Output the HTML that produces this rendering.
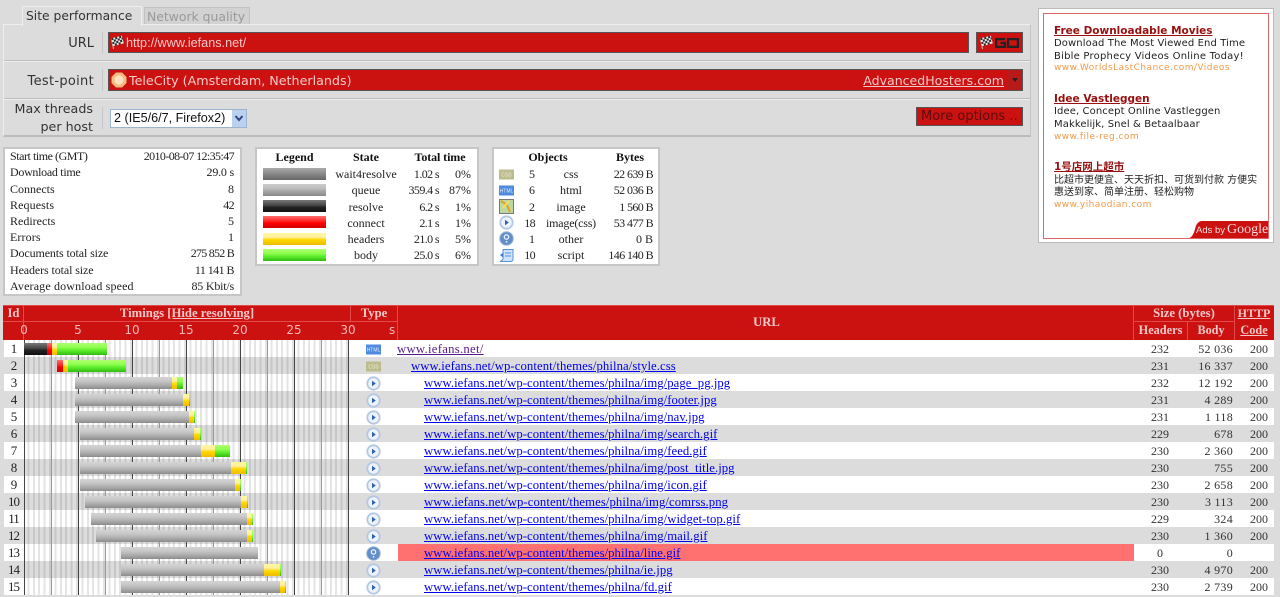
<!DOCTYPE html>
<html><head><meta charset="utf-8"><title>Site performance</title>
<style>
html,body{margin:0;padding:0}
html{background:#dcdcdc}
body{width:1280px;height:597px;overflow:hidden;background:#dcdcdc;position:relative;font-family:"Liberation Serif","Noto Serif CJK SC",serif;font-size:12px;color:#222;filter:blur(.3px)}
div,a,span.a,svg{position:absolute}
.d{font-family:"DejaVu Sans","Noto Sans CJK SC",sans-serif;white-space:nowrap}
.box{background:#fff;border:2px solid #c6c6c6;box-sizing:border-box}
.t{white-space:nowrap;line-height:16px;height:16px}
.rt{text-align:right}.ct{text-align:center}
.n{letter-spacing:-.6px}
.h{font-weight:bold;color:#111}
.sw{left:263px;width:63px;height:12px}
.gy{background:linear-gradient(#aaa,#999 25%,#888 50%,#666)}
.qu{background:linear-gradient(#d4d4d4,#c6c6c6 35%,#b2b2b2 60%,#8c8c8c)}
.bk{background:linear-gradient(#777,#444 45%,#222 60%,#111)}
.re{background:linear-gradient(#ff7070,#ff2020 45%,#f00 60%,#c00)}
.ye{background:linear-gradient(#fff7a0,#fff0a0 35%,#ffd800 55%,#eebb00)}
.gr{background:linear-gradient(#b0ff70,#90ff50 35%,#60ee30 60%,#30bb10)}
.tb{top:305px;left:3px;width:1271px;height:35px;background:#cc1111}
.hd{color:#f3c8c8;font-weight:bold;text-align:center;white-space:nowrap;font-size:12.7px;line-height:17px}
.ln{background:#e24a4a}
.row{left:4px;width:1270px;height:17px;overflow:hidden}
.w{background:#fff}.g{background:#dcdcdc}
.row div{height:17px;line-height:19px;white-space:nowrap;font-size:12px}
.row .id{left:0;width:19px;text-align:center;font-size:13px;letter-spacing:-1px;color:#222;line-height:17px}
.row .grid{left:20px;top:0;width:325px;height:17px;background-image:linear-gradient(90deg,#444 1px,transparent 1px),linear-gradient(90deg,#999 1px,transparent 1px),repeating-linear-gradient(90deg,transparent 0,transparent 3.4px,rgba(0,0,0,.1) 3.4px,rgba(0,0,0,.1) 5.4px);background-size:54px 17px,54px 17px,100% 17px;background-position:0 0,27px 0,0 0;background-repeat:repeat-x,repeat-x,no-repeat}
.row .b{top:3px;height:12px;line-height:12px}
.row .u{color:#00e;text-decoration:underline;font-size:12.72px;letter-spacing:.04px}
.hs{left:1134px;width:44px;text-align:center;color:#333}
.bs{left:1160px;width:69px;text-align:right;color:#333;letter-spacing:.3px}
.cs{left:1230px;width:34px;text-align:right;color:#333}
.ic{left:362px;top:2px;width:15px;height:15px}
.ad1{left:1054px;font-size:10.500px;line-height:13px;font-weight:bold;color:#990f0f;text-decoration:underline}
.ad2{left:1054px;font-size:10px;line-height:13px;color:#222}
.ad3{left:1054px;font-size:9px;line-height:12px;color:#f09a4a;letter-spacing:.45px}
</style></head><body>
<svg width="0" height="0" style="left:0;top:0"><defs>
<symbol id="pl" viewBox="0 0 15 15"><circle cx="7.5" cy="7.5" r="6.2" fill="#eef3fb" stroke="#b4c8e4" stroke-width="1.8"/><path d="M6 4.800 9.800 7.500 6 10.200Z" fill="#2f63b0"/></symbol>
<symbol id="ht" viewBox="0 0 15 15"><rect x="0" y="2.500" width="15" height="10" fill="#4f8ae0"/><text x="7.500" y="9.600" font-size="5" text-anchor="middle" fill="#e4eefc" font-family="Liberation Sans">HTML</text></symbol>
<symbol id="cs" viewBox="0 0 15 15"><rect x="0" y="2.500" width="15" height="10" fill="#bcbc8c"/><text x="7.500" y="9.600" font-size="5" text-anchor="middle" fill="#f0f0e0" font-family="Liberation Sans">CSS</text></symbol>
<symbol id="qu" viewBox="0 0 15 15"><circle cx="7.5" cy="7.5" r="6.8" fill="#5f8ec8" stroke="#a4bad6"/><circle cx="7.5" cy="6" r="2.200" fill="none" stroke="#e8f0fa" stroke-width="1.300"/><rect x="6.800" y="10" width="1.500" height="1.600" fill="#e8f0fa"/></symbol>
<symbol id="fl" viewBox="0 0 14 15"><path d="M3.500 14 1.500 4" stroke="#bbb" stroke-width="1"/><g transform="rotate(-14 7 6)"><rect x="2" y="2" width="11" height="8" fill="#e4e4e4"/><path d="M2 2h2v2H2zM6 2h2v2H6zM10 2h2v2h-2zM4 4h2v2H4zM8 4h2v2H8zM12 4h1v2h-1zM2 6h2v2H2zM6 6h2v2H6zM10 6h2v2h-2zM4 8h2v2H4zM8 8h2v2H8z" fill="#2a2a2a"/></g></symbol>
</defs></svg>

<!-- tabs -->
<div style="left:22px;top:6px;width:120px;height:20px;background:#dcdcdc;border:1px solid #eee;border-bottom:0;box-sizing:border-box;z-index:2"></div>
<div class="d" style="left:26px;top:8px;font-size:12.3px;line-height:17px;color:#333;z-index:3">Site performance</div>
<div style="left:144px;top:7px;width:106px;height:18px;background:#d2d2d2;border:1px solid #c2c2c2;box-sizing:border-box"></div>
<div class="d" style="left:147px;top:8px;font-size:12.4px;line-height:17px;color:#999">Network quality</div>

<!-- form panel -->
<div style="left:3px;top:24px;width:1028px;height:113px;background:#dcdcdc;border:1px solid #c4c4c4;border-top-color:#eee;border-left-color:#eee;border-bottom:2px solid #bbb;box-sizing:border-box"></div>
<div style="left:4px;top:60px;width:1026px;height:1px;background:#bdbdbd"></div><div style="left:4px;top:61px;width:1026px;height:1px;background:#efefef"></div>
<div style="left:4px;top:98px;width:1026px;height:1px;background:#bdbdbd"></div><div style="left:4px;top:99px;width:1026px;height:1px;background:#efefef"></div>
<div style="left:102px;top:32px;width:1px;height:22px;background:#c8c8c8"></div>
<div style="left:102px;top:69px;width:1px;height:22px;background:#c8c8c8"></div>
<div style="left:102px;top:107px;width:1px;height:22px;background:#c8c8c8"></div>

<div class="d rt" style="left:20px;width:74px;top:35px;font-size:13px;line-height:17px;color:#333">URL</div>
<div class="d rt" style="left:20px;width:74px;top:73px;font-size:13px;line-height:17px;color:#333;letter-spacing:.3px">Test-point</div>
<div class="d rt" style="left:3px;width:90px;top:100px;font-size:12.7px;line-height:18px;color:#333">Max threads<br>per host</div>

<div style="left:108px;top:32px;width:861px;height:21px;background:#cc1111;border:1px solid #555;box-sizing:border-box"></div>
<svg style="left:110px;top:35px" width="14" height="15"><use href="#fl"/></svg>
<div style="left:126px;top:35px;font-family:'Liberation Sans',sans-serif;font-size:12.65px;line-height:16px;color:#f5c8c8;white-space:nowrap">http://www.iefans.net/</div>

<div style="left:976px;top:32px;width:47px;height:21px;background:#cc1111;border:1px solid #555;box-sizing:border-box"></div>
<svg style="left:979px;top:35px" width="14" height="15"><use href="#fl"/></svg>
<svg style="left:995px;top:38px" width="24" height="10" viewBox="0 0 24 10"><path d="M10 1.100H1.100V8.900H10V5H5.500M13 1.100H22.900V8.900H13z" fill="none" stroke="#222" stroke-width="2.200"/></svg>

<div style="left:108px;top:69px;width:915px;height:22px;background:#cc1111;border:1px solid #555;box-sizing:border-box"></div>
<svg style="left:111px;top:72px" width="16" height="16" viewBox="0 0 16 16"><path d="M5 .5h6L15.500 5v6L11 15.500H5L.5 11V5z" fill="#f8bc80"/><circle cx="8" cy="8" r="4.500" fill="#fde2c4"/></svg>
<div class="d" style="left:129px;top:72px;font-size:12.7px;line-height:17px;color:#f3c8c8">TeleCity (Amsterdam, Netherlands)</div>
<div class="d rt" style="left:804px;width:200px;top:72px;font-size:12.55px;line-height:17px;color:#f3c8c8;text-decoration:underline">AdvancedHosters.com</div>
<div style="left:1007px;top:70px;width:15px;height:20px;background:#b81a1a"></div>
<svg style="left:1011px;top:77px" width="8" height="6" viewBox="0 0 8 6"><path d="M1 1h6L4 5z" fill="#222"/></svg>

<div style="left:110px;top:109px;width:137px;height:19px;background:#fff;border:1px solid #9cb4d0;box-sizing:border-box"></div>
<div style="left:114px;top:110px;font-family:'Liberation Sans',sans-serif;font-size:12.6px;line-height:16px;color:#111;white-space:nowrap">2 (IE5/6/7, Firefox2)</div>
<div style="left:232px;top:110px;width:14px;height:17px;background:#bcd0f0"></div>
<svg style="left:234px;top:115px" width="10" height="7" viewBox="0 0 10 7"><path d="M1.500 1 5 5 8.500 1" fill="none" stroke="#2c4a80" stroke-width="2"/></svg>

<div style="left:916px;top:107px;width:107px;height:19px;background:#cc1111;border:1px solid #555;box-sizing:border-box"></div>
<div class="d" style="left:921px;top:108px;font-size:13px;line-height:17px;color:#5a0d0d">More options ..</div>

<!-- ad -->
<div class="box" style="left:1038px;top:8px;width:236px;height:235px;background:#fff;border-width:1px;border-color:#bbb"></div>
<div style="left:1043px;top:13px;width:226px;height:226px;border:1px solid #dd6666;box-sizing:border-box;background:#fff"></div>
<div class="d ad1" style="top:25px">Free Downloadable Movies</div>
<div class="d ad2" style="top:37px;letter-spacing:.1px">Download The Most Viewed End Time</div>
<div class="d ad2" style="top:50px;letter-spacing:.22px">Bible Prophecy Videos Online Today!</div>
<div class="d ad3" style="top:62px">www.WorldsLastChance.com/Videos</div>
<div class="d ad1" style="top:93px">Idee Vastleggen</div>
<div class="d ad2" style="top:105px;letter-spacing:.1px">Idee, Concept Online Vastleggen</div>
<div class="d ad2" style="top:118px;letter-spacing:.1px">Makkelijk, Snel &amp; Betaalbaar</div>
<div class="d ad3" style="top:131px">www.file-reg.com</div>
<div class="d ad1" style="top:161px">1号店网上超市</div>
<div class="d ad2" style="top:174px">比超市更便宜、天天折扣、可货到付款 方便实</div>
<div class="d ad2" style="top:186px">惠送到家、简单注册、轻松购物</div>
<div class="d ad3" style="top:199px">www.yihaodian.com</div>
<svg style="left:1189px;top:221px" width="79" height="17" viewBox="0 0 79 17"><path d="M0 17Q4 16 6 8 8 0 13 0H79V17z" fill="#cc1111"/></svg>
<div style="left:1196px;top:224px;font-family:'Liberation Sans',sans-serif;font-size:9.500px;line-height:13px;color:#f6dcdc;white-space:nowrap">Ads by</div>
<div style="left:1227px;top:221px;font-family:'Liberation Serif',serif;font-size:14px;line-height:17px;color:#f6dcdc;white-space:nowrap">Google</div>

<!-- stats -->
<div class="box" style="left:3px;top:147px;width:239px;height:149px"></div>
<div class="t" style="left:10px;top:148px;letter-spacing:-.45px">Start time (GMT)</div><div class="t rt" style="left:114px;width:120px;top:148px;letter-spacing:-.6px">2010-08-07 12:35:47</div>
<div class="t" style="left:10px;top:164px;letter-spacing:-.3px">Download time</div><div class="t rt n" style="left:114px;width:120px;top:164px;letter-spacing:-.2px">29.0 s</div>
<div class="t" style="left:10px;top:181px">Connects</div><div class="t rt" style="left:114px;width:120px;top:181px">8</div>
<div class="t" style="left:10px;top:197px;letter-spacing:.1px">Requests</div><div class="t rt n" style="left:114px;width:120px;top:197px">42</div>
<div class="t" style="left:10px;top:213px">Redirects</div><div class="t rt" style="left:114px;width:120px;top:213px">5</div>
<div class="t" style="left:10px;top:229px;letter-spacing:.1px">Errors</div><div class="t rt" style="left:114px;width:120px;top:229px">1</div>
<div class="t" style="left:10px;top:245px;letter-spacing:-.12px">Documents total size</div><div class="t rt" style="left:114px;width:120px;top:245px;letter-spacing:-.75px">275 852 B</div>
<div class="t" style="left:10px;top:262px;letter-spacing:-.1px">Headers total size</div><div class="t rt" style="left:114px;width:120px;top:262px;letter-spacing:-.55px">11 141 B</div>
<div class="t" style="left:10px;top:278px;letter-spacing:.15px">Average download speed</div><div class="t rt" style="left:114px;width:120px;top:278px;letter-spacing:-.2px">85 Kbit/s</div>

<!-- legend -->
<div class="box" style="left:255px;top:147px;width:224px;height:119px"></div>
<div class="t ct h" style="left:263px;width:63px;top:149px">Legend</div>
<div class="t ct h" style="left:336px;width:60px;top:149px">State</div>
<div class="t ct h" style="left:400px;width:80px;top:149px;letter-spacing:-.1px">Total time</div>
<div class="sw gy" style="top:168px"></div><div class="sw" style="top:184px;background:linear-gradient(#ccc,#bbb 40%,#aaa 55%,#888)"></div><div class="sw bk" style="top:200px"></div><div class="sw re" style="top:216px"></div><div class="sw ye" style="top:233px"></div><div class="sw gr" style="top:249px"></div>
<div class="t ct" style="left:330px;width:72px;top:166px">wait4resolve</div><div class="t rt n" style="left:400px;width:39px;top:166px">1.02 s</div><div class="t rt" style="left:440px;width:31px;top:166px">0%</div>
<div class="t ct" style="left:330px;width:72px;top:182px">queue</div><div class="t rt n" style="left:400px;width:39px;top:182px">359.4 s</div><div class="t rt" style="left:440px;width:31px;top:182px">87%</div>
<div class="t ct" style="left:330px;width:72px;top:199px">resolve</div><div class="t rt n" style="left:400px;width:39px;top:199px">6.2 s</div><div class="t rt" style="left:440px;width:31px;top:199px">1%</div>
<div class="t ct" style="left:330px;width:72px;top:215px">connect</div><div class="t rt n" style="left:400px;width:39px;top:215px">2.1 s</div><div class="t rt" style="left:440px;width:31px;top:215px">1%</div>
<div class="t ct" style="left:330px;width:72px;top:231px">headers</div><div class="t rt n" style="left:400px;width:39px;top:231px">21.0 s</div><div class="t rt" style="left:440px;width:31px;top:231px">5%</div>
<div class="t ct" style="left:330px;width:72px;top:247px">body</div><div class="t rt n" style="left:400px;width:39px;top:247px">25.0 s</div><div class="t rt" style="left:440px;width:31px;top:247px">6%</div>

<!-- objects -->
<div class="box" style="left:492px;top:147px;width:168px;height:119px"></div>
<div class="t ct h" style="left:518px;width:60px;top:149px">Objects</div><div class="t ct h" style="left:600px;width:60px;top:149px">Bytes</div>
<svg style="left:499px;top:167px" width="15" height="15"><use href="#cs"/></svg>
<svg style="left:499px;top:183px" width="15" height="15"><use href="#ht"/></svg>
<svg style="left:499px;top:199px" width="15" height="15" viewBox="0 0 15 15"><rect x=".5" y=".5" width="14" height="14" fill="#bcd8a0" stroke="#777"/><path d="M2 2 8 6 11 13" fill="none" stroke="#e8a020" stroke-width="2"/><path d="M10 2 4 9" stroke="#f2e060" stroke-width="2"/></svg>
<svg style="left:499px;top:215px" width="15" height="15"><use href="#pl"/></svg>
<svg style="left:499px;top:231px" width="15" height="15"><use href="#qu"/></svg>
<svg style="left:499px;top:248px" width="15" height="15" viewBox="0 0 15 15"><path d="M4 1.500h10V11q0 2.500-3 2.500H1.500L4 11z" fill="#cfe2fa" stroke="#5a92d8"/><path d="M1 7 4.500 4.500V10z" fill="#3a78d0"/><path d="M6 5h6M6 8h6" stroke="#5a92d8"/></svg>
<div class="t rt" style="left:517px;width:18px;top:166px">5</div><div class="t ct" style="left:541px;width:60px;top:166px">css</div><div class="t rt n" style="left:590px;width:63px;top:166px">22 639 B</div>
<div class="t rt" style="left:517px;width:18px;top:182px">6</div><div class="t ct" style="left:541px;width:60px;top:182px">html</div><div class="t rt n" style="left:590px;width:63px;top:182px">52 036 B</div>
<div class="t rt" style="left:517px;width:18px;top:199px">2</div><div class="t ct" style="left:541px;width:60px;top:199px">image</div><div class="t rt n" style="left:590px;width:63px;top:199px">1 560 B</div>
<div class="t rt n" style="left:517px;width:18px;top:215px">18</div><div class="t ct" style="left:541px;width:60px;top:215px;letter-spacing:-.2px">image(css)</div><div class="t rt n" style="left:590px;width:63px;top:215px">53 477 B</div>
<div class="t rt" style="left:517px;width:18px;top:231px">1</div><div class="t ct" style="left:541px;width:60px;top:231px">other</div><div class="t rt" style="left:590px;width:63px;top:231px">0 B</div>
<div class="t rt n" style="left:517px;width:18px;top:247px">10</div><div class="t ct" style="left:541px;width:60px;top:247px">script</div><div class="t rt n" style="left:590px;width:63px;top:247px">146 140 B</div>

<!-- table header -->
<div class="tb"></div>
<div class="ln" style="left:3px;top:305px;width:1271px;height:1px"></div>
<div class="ln" style="left:3px;top:321px;width:394px;height:1px"></div>
<div class="ln" style="left:1133px;top:321px;width:101px;height:1px"></div>
<div class="ln" style="left:23px;top:305px;width:1px;height:35px"></div>
<div class="ln" style="left:350px;top:305px;width:1px;height:17px"></div>
<div class="ln" style="left:397px;top:305px;width:1px;height:35px"></div>
<div class="ln" style="left:1133px;top:305px;width:1px;height:35px"></div>
<div class="ln" style="left:1187px;top:322px;width:1px;height:18px"></div>
<div class="ln" style="left:1234px;top:305px;width:1px;height:35px"></div>
<div class="hd" style="left:4px;width:19px;top:305px">Id</div>
<div class="hd" style="left:24px;width:326px;top:305px">Timings <span style="text-decoration:underline">[Hide resolving]</span></div>
<div class="hd" style="left:351px;width:46px;top:305px">Type</div>
<div class="hd" style="left:399px;width:735px;top:314px">URL</div>
<div class="hd" style="left:1134px;width:100px;top:305px">Size (bytes)</div>
<div class="hd" style="left:1134px;width:53px;top:322px;font-size:12.3px">Headers</div>
<div class="hd" style="left:1188px;width:46px;top:322px;font-size:12.2px">Body</div>
<div class="hd" style="left:1235px;width:38px;top:305px;text-decoration:underline;font-size:12px">HTTP</div>
<div class="hd" style="left:1235px;width:38px;top:322px;text-decoration:underline;font-size:12.3px">Code</div>
<div class="d ct" style="left:9px;width:30px;top:323px;font-size:12px;line-height:15px;color:#f0b8b8">0</div>
<div class="d ct" style="left:63px;width:30px;top:323px;font-size:12px;line-height:15px;color:#f0b8b8">5</div>
<div class="d ct" style="left:117px;width:30px;top:323px;font-size:12px;line-height:15px;color:#f0b8b8">10</div>
<div class="d ct" style="left:171px;width:30px;top:323px;font-size:12px;line-height:15px;color:#f0b8b8">15</div>
<div class="d ct" style="left:225px;width:30px;top:323px;font-size:12px;line-height:15px;color:#f0b8b8">20</div>
<div class="d ct" style="left:279px;width:30px;top:323px;font-size:12px;line-height:15px;color:#f0b8b8">25</div>
<div class="d ct" style="left:333px;width:30px;top:323px;font-size:12px;line-height:15px;color:#f0b8b8">30</div>
<div class="d" style="left:389px;top:323px;font-size:12px;line-height:15px;color:#f0b8b8">s</div>

<!-- rows -->
<div class="row w" style="top:340px"><div class="id">1</div><div class="grid"></div>
<div class="b bk" style="left:20px;width:23px"></div><div class="b re" style="left:43px;width:5px"></div><div class="b ye" style="left:48px;width:5px"></div><div class="b gr" style="left:53px;width:50px"></div>
<svg class="ic"><use href="#ht"/></svg><div class="u" style="left:393px;color:#551a8b;letter-spacing:.27px">www.iefans.net/</div><div class="hs">232</div><div class="bs">52 036</div><div class="cs">200</div></div>

<div class="row g" style="top:357px"><div class="id">2</div><div class="grid"></div>
<div class="b re" style="left:53px;width:6px"></div><div class="b ye" style="left:59px;width:5px"></div><div class="b gr" style="left:64px;width:58px"></div>
<svg class="ic"><use href="#cs"/></svg><div class="u" style="left:407px;letter-spacing:.08px">www.iefans.net/wp-content/themes/philna/style.css</div><div class="hs">231</div><div class="bs">16 337</div><div class="cs">200</div></div>

<div class="row w" style="top:374px"><div class="id">3</div><div class="grid"></div>
<div class="b qu" style="left:71px;width:97px"></div><div class="b ye" style="left:168px;width:5px"></div><div class="b gr" style="left:173px;width:6px"></div>
<svg class="ic"><use href="#pl"/></svg><div class="u" style="left:420px">www.iefans.net/wp-content/themes/philna/img/page_pg.jpg</div><div class="hs">232</div><div class="bs">12 192</div><div class="cs">200</div></div>

<div class="row g" style="top:391px"><div class="id">4</div><div class="grid"></div>
<div class="b qu" style="left:71px;width:108px"></div><div class="b ye" style="left:179px;width:6px"></div><div class="b gr" style="left:185px;width:1px"></div>
<svg class="ic"><use href="#pl"/></svg><div class="u" style="left:420px">www.iefans.net/wp-content/themes/philna/img/footer.jpg</div><div class="hs">231</div><div class="bs">4 289</div><div class="cs">200</div></div>

<div class="row w" style="top:408px"><div class="id">5</div><div class="grid"></div>
<div class="b qu" style="left:71px;width:114px"></div><div class="b ye" style="left:185px;width:5px"></div><div class="b gr" style="left:190px;width:1px"></div>
<svg class="ic"><use href="#pl"/></svg><div class="u" style="left:420px">www.iefans.net/wp-content/themes/philna/img/nav.jpg</div><div class="hs">231</div><div class="bs">1 118</div><div class="cs">200</div></div>

<div class="row g" style="top:425px"><div class="id">6</div><div class="grid"></div>
<div class="b qu" style="left:76px;width:114px"></div><div class="b ye" style="left:190px;width:6px"></div><div class="b gr" style="left:196px;width:1px"></div>
<svg class="ic"><use href="#pl"/></svg><div class="u" style="left:420px">www.iefans.net/wp-content/themes/philna/img/search.gif</div><div class="hs">229</div><div class="bs">678</div><div class="cs">200</div></div>

<div class="row w" style="top:442px"><div class="id">7</div><div class="grid"></div>
<div class="b qu" style="left:76px;width:121px"></div><div class="b ye" style="left:197px;width:14px"></div><div class="b gr" style="left:211px;width:15px"></div>
<svg class="ic"><use href="#pl"/></svg><div class="u" style="left:420px">www.iefans.net/wp-content/themes/philna/img/feed.gif</div><div class="hs">230</div><div class="bs">2 360</div><div class="cs">200</div></div>

<div class="row g" style="top:459px"><div class="id">8</div><div class="grid"></div>
<div class="b qu" style="left:76px;width:151px"></div><div class="b ye" style="left:227px;width:15px"></div><div class="b gr" style="left:242px;width:1px"></div>
<svg class="ic"><use href="#pl"/></svg><div class="u" style="left:420px">www.iefans.net/wp-content/themes/philna/img/post_title.jpg</div><div class="hs">230</div><div class="bs">755</div><div class="cs">200</div></div>

<div class="row w" style="top:476px"><div class="id">9</div><div class="grid"></div>
<div class="b qu" style="left:76px;width:155px"></div><div class="b ye" style="left:231px;width:5px"></div><div class="b gr" style="left:236px;width:1px"></div>
<svg class="ic"><use href="#pl"/></svg><div class="u" style="left:420px">www.iefans.net/wp-content/themes/philna/img/icon.gif</div><div class="hs">230</div><div class="bs">2 658</div><div class="cs">200</div></div>

<div class="row g" style="top:493px"><div class="id">10</div><div class="grid"></div>
<div class="b qu" style="left:81px;width:156px"></div><div class="b ye" style="left:237px;width:6px"></div><div class="b gr" style="left:243px;width:1px"></div>
<svg class="ic"><use href="#pl"/></svg><div class="u" style="left:420px;letter-spacing:.08px">www.iefans.net/wp-content/themes/philna/img/comrss.png</div><div class="hs">230</div><div class="bs">3 113</div><div class="cs">200</div></div>

<div class="row w" style="top:510px"><div class="id">11</div><div class="grid"></div>
<div class="b qu" style="left:87px;width:156px"></div><div class="b ye" style="left:243px;width:5px"></div><div class="b gr" style="left:248px;width:1px"></div>
<svg class="ic"><use href="#pl"/></svg><div class="u" style="left:420px">www.iefans.net/wp-content/themes/philna/img/widget-top.gif</div><div class="hs">229</div><div class="bs">324</div><div class="cs">200</div></div>

<div class="row g" style="top:527px"><div class="id">12</div><div class="grid"></div>
<div class="b qu" style="left:92px;width:151px"></div><div class="b ye" style="left:243px;width:5px"></div><div class="b gr" style="left:248px;width:1px"></div>
<svg class="ic"><use href="#pl"/></svg><div class="u" style="left:420px">www.iefans.net/wp-content/themes/philna/img/mail.gif</div><div class="hs">230</div><div class="bs">1 360</div><div class="cs">200</div></div>

<div class="row w" style="top:544px"><div class="id">13</div><div class="grid"></div>
<div class="b qu" style="left:117px;width:137px"></div>
<div style="left:394px;width:736px;background:#ff7070"></div>
<svg class="ic"><use href="#qu"/></svg><div class="u" style="left:420px">www.iefans.net/wp-content/themes/philna/line.gif</div><div class="hs">0</div><div class="bs">0</div></div>

<div class="row g" style="top:561px"><div class="id">14</div><div class="grid"></div>
<div class="b qu" style="left:117px;width:143px"></div><div class="b ye" style="left:260px;width:16px"></div><div class="b gr" style="left:276px;width:1px"></div>
<svg class="ic"><use href="#pl"/></svg><div class="u" style="left:420px">www.iefans.net/wp-content/themes/philna/ie.jpg</div><div class="hs">230</div><div class="bs">4 970</div><div class="cs">200</div></div>

<div class="row w" style="top:578px"><div class="id">15</div><div class="grid"></div>
<div class="b qu" style="left:117px;width:159px"></div><div class="b ye" style="left:276px;width:5px"></div><div class="b gr" style="left:281px;width:1px"></div>
<svg class="ic"><use href="#pl"/></svg><div class="u" style="left:420px">www.iefans.net/wp-content/themes/philna/fd.gif</div><div class="hs">230</div><div class="bs">2 739</div><div class="cs">200</div></div>

<div class="row g" style="top:595px;height:2px"></div>
</body></html>
